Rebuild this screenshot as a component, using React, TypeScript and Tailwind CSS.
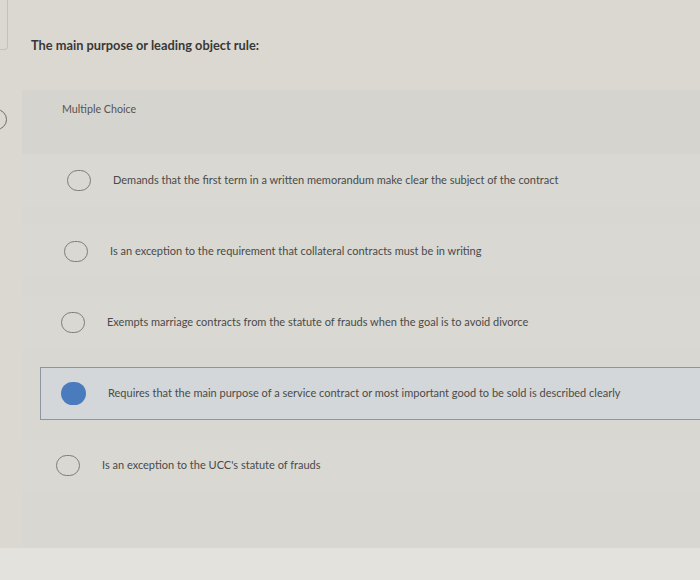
const options = [
  { text: "Demands that the first term in a written memorandum make clear the subject of the contract", pad: "pl-[45px]" },
  { text: "Is an exception to the requirement that collateral contracts must be in writing", pad: "pl-[42px]" },
  { text: "Exempts marriage contracts from the statute of frauds when the goal is to avoid divorce", pad: "pl-[39px]" },
  { text: "Requires that the main purpose of a service contract or most important good to be sold is described clearly", pad: "pl-[20px]", selected: true },
  { text: "Is an exception to the UCC's statute of frauds", pad: "pl-[34px]" },
];

function Radio({ selected }: { selected?: boolean }) {
  if (selected) {
    return <div className="w-[25px] h-[23px] shrink-0 rounded-full bg-[#4a7bbd]" />;
  }
  return <div className="w-[24px] h-[21px] shrink-0 rounded-full border-[1.5px] border-[#7d7c79]" />;
}

export default function App() {
  return (
    <div className="relative w-[700px] h-[580px] overflow-hidden bg-[#dbd8d2] font-['Lato',sans-serif] flex flex-col">
      {/* cut-off bits on the left edge */}
      <div className="absolute left-[-12px] top-[-6px] w-[20px] h-[56px] rounded-br-[4px] border-r border-b border-[#c4c1bb]" />
      <div className="absolute left-[-14px] top-[109px] w-[21px] h-[21px] rounded-full border-[1.5px] border-[#6e6d6a]" />

      <h1 className="pl-[31px] pt-[36px] h-[90px] text-[12.8px] font-bold text-[#383836]">
        The main purpose or leading object rule:
      </h1>

      <div className="ml-[22px] flex-1 bg-[#d8d7d2] flex flex-col">
        <div className="h-[64px] pl-[40px] pt-[11px] text-[10.7px] text-[#555552] bg-[#d6d4cf]">
          Multiple Choice
        </div>
        <div className="flex flex-col gap-[19px] pb-[40px]">
          {options.map((o, i) =>
            o.selected ? (
              <div
                key={i}
                className="ml-[18px] h-[53px] flex items-center gap-[22px] pl-[20px] bg-[#d4d7d9] border-[1.5px] border-[#8d96a0] border-r-0"
              >
                <Radio selected />
                <span className="text-[11px] text-[#4a4a48]">{o.text}</span>
              </div>
            ) : (
              <div key={i} className={"h-[52px] flex items-center gap-[22px] bg-[#d9d8d3] " + o.pad}>
                <Radio />
                <span className="text-[11px] text-[#4a4a48]">{o.text}</span>
              </div>
            )
          )}
        </div>
      </div>
      <div className="h-[32px] bg-[#e4e2dc]" />
    </div>
  );
}
